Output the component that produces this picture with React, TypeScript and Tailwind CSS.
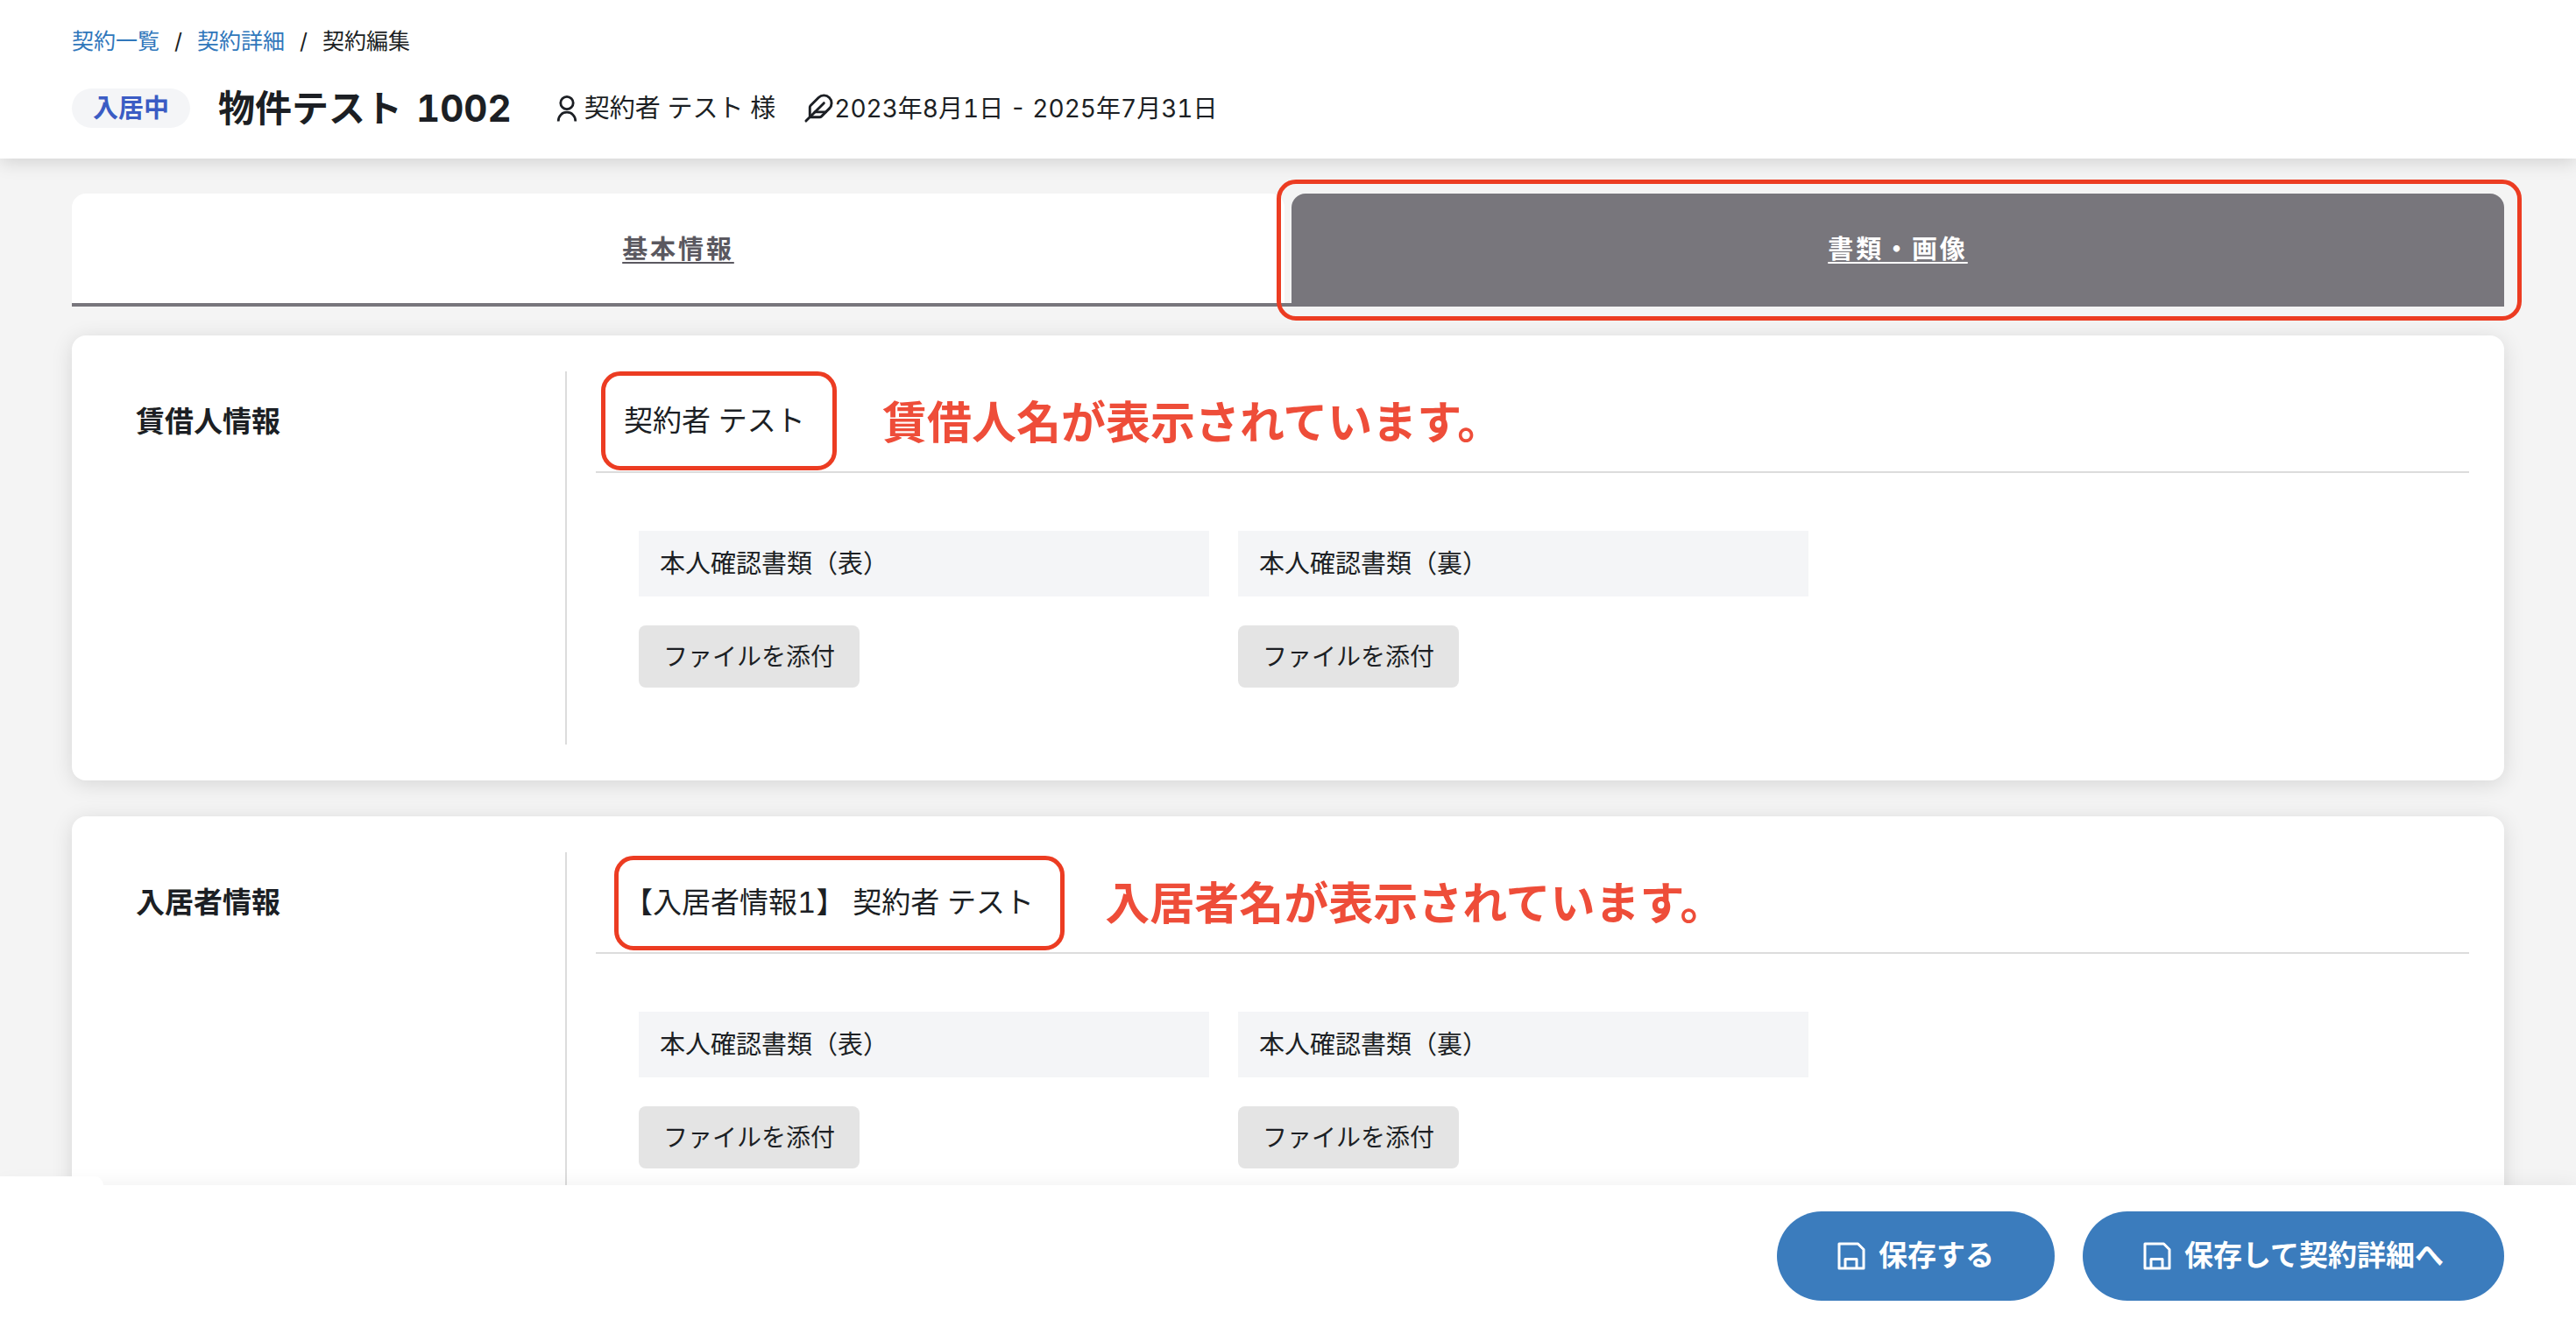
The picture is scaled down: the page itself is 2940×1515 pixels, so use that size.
import { Feather } from 'lucide-react'

interface Tenant {
  id: string
  label: string
  name: string
  note: string
  frameClass: string
  noteClass: string
}

const tenants: Tenant[] = [
  {
    id: 'lessee',
    label: '賃借人情報',
    name: '契約者 テスト',
    note: '賃借人名が表示されています。',
    frameClass: 'ml-1.5 mb-px pl-[21px] pr-[31px]',
    noteClass: 'ml-[52px]',
  },
  {
    id: 'resident',
    label: '入居者情報',
    name: '【入居者情報1】 契約者 テスト',
    note: '入居者名が表示されています。',
    frameClass: 'ml-[21px] mt-1 mb-0.5 pl-1.5 pr-[30px]',
    noteClass: 'ml-[46px]',
  },
]

const documents = ['本人確認書類（表）', '本人確認書類（裏）']

function UserIcon() {
  return (
    <svg width="24" height="32" viewBox="0 0 24 32" fill="none" stroke="currentColor" strokeWidth="2.8" aria-hidden="true">
      <circle cx="12" cy="9.5" r="7.2" />
      <path d="M2.2 30.5C2.2 24.5 6.5 20.2 12 20.2S21.8 24.5 21.8 30.5" />
    </svg>
  )
}

function SaveIcon() {
  return (
    <svg width="32" height="32" viewBox="0 0 32 32" fill="none" stroke="currentColor" strokeWidth="3" strokeLinejoin="round" aria-hidden="true">
      <path d="M2 2H23.5L30 8.5V30H2Z" />
      <path d="M9 30V19.5H22V30" />
    </svg>
  )
}

function Header() {
  return (
    <header className="relative z-10 bg-white px-[82px] pt-[30px] pb-[26px] shadow-[0_4px_20px_rgba(0,0,0,0.14)]">
      <nav aria-label="パンくず" className="flex h-9 items-center gap-[17px] text-[25px]">
        <a href="#list" className="text-[#3077bb]">契約一覧</a>
        <span>/</span>
        <a href="#detail" className="text-[#3077bb]">契約詳細</a>
        <span>/</span>
        <span>契約編集</span>
      </nav>
      <div className="mt-[26px] flex h-[63px] items-center">
        <span className="flex h-[45px] items-center rounded-full bg-[#f4f5f7] px-6 text-[29px] font-bold text-[#3b5cc4]">
          入居中
        </span>
        <h1 className="ml-8 flex gap-4 text-[42px] font-bold">
          <span>物件テスト</span>
          <span>1002</span>
        </h1>
        <div className="ml-[51px] flex items-center gap-2 text-[29px]">
          <UserIcon />
          <span>契約者 テスト 様</span>
        </div>
        <div className="ml-8 flex items-center text-[28px]">
          <Feather size={35} strokeWidth={2} />
          <span>2023年8月1日 - 2025年7月31日</span>
        </div>
      </div>
    </header>
  )
}

function Tabs() {
  return (
    <nav className="grid grid-cols-2 gap-2 border-b-4 border-[#78767c] text-[29px] font-bold tracking-widest">
      <a href="#basic" className="flex h-[125px] items-center justify-center rounded-t-2xl bg-white pt-0.5 text-[#5a585f] underline underline-offset-4">
        基本情報
      </a>
      <div className="relative">
        <a href="#documents" aria-current="page" className="flex h-[125px] items-center justify-center rounded-t-2xl bg-[#78767c] pt-0.5 text-white underline underline-offset-4">
          書類・画像
        </a>
        {/* highlight frame around the active tab */}
        <div className="pointer-events-none absolute -top-4 -right-5 -bottom-5 -left-[17px] rounded-[22px] border-[5px] border-[#ec3c22]" />
      </div>
    </nav>
  )
}

function DocumentField({ title }: { title: string }) {
  return (
    <div className="flex flex-col items-start gap-[33px]">
      <div className="flex h-[75px] w-full items-center bg-[#f4f5f7] px-6 text-[29px]">{title}</div>
      <button type="button" className="h-[71px] rounded-lg bg-[#e4e4e4] px-7 text-[28px]">
        ファイルを添付
      </button>
    </div>
  )
}

function TenantCard({ tenant }: { tenant: Tenant }) {
  return (
    <section className="flex rounded-2xl bg-white py-[41px] pr-10 shadow-[0_4px_24px_rgba(0,0,0,0.12)]">
      <h2 className="flex h-[116px] w-[563px] shrink-0 items-center pl-[73px] text-[33px] font-bold">{tenant.label}</h2>
      <div className="flex-1 border-l-2 border-[#dcdcdc] pb-[65px] pl-[33px]">
        <div className="flex h-[116px] items-stretch border-b-2 border-[#dcdcdc]">
          <div className={`flex items-center rounded-[22px] border-[5px] border-[#ec3c22] text-[33px] ${tenant.frameClass}`}>
            {tenant.name}
          </div>
          <p className={`flex items-center pt-1 text-[51px] font-bold text-[#ee4d39] ${tenant.noteClass}`}>{tenant.note}</p>
        </div>
        <div className="grid grid-cols-3 gap-[33px] pt-[66px] pr-[70px] pl-[49px]">
          {documents.map(title => (
            <DocumentField key={title} title={title} />
          ))}
        </div>
      </div>
    </section>
  )
}

function SaveButton({ label }: { label: string }) {
  return (
    <button type="button" className="flex h-[102px] items-center gap-[15px] rounded-full bg-[#3b7cbd] px-[69px] text-[33px] font-bold text-white">
      <SaveIcon />
      {label}
    </button>
  )
}

function Footer() {
  return (
    <footer className="relative z-10 flex justify-end gap-8 bg-white px-[82px] py-[30px] shadow-[0_-2px_20px_rgba(0,0,0,0.06)]">
      <div className="absolute bottom-full left-0 h-2.5 w-[118px] rounded-tr-[10px] bg-white" />
      <SaveButton label="保存する" />
      <SaveButton label="保存して契約詳細へ" />
    </footer>
  )
}

export default function App() {
  return (
    <div className="flex h-screen flex-col overflow-hidden bg-[#f4f4f4] font-[Inter,'Noto_Sans_CJK_JP',sans-serif] text-[#1c1f24] tabular-nums">
      <Header />
      <main className="min-h-0 flex-1 overflow-hidden px-[82px] pt-10">
        <Tabs />
        <div className="mt-[33px] flex flex-col gap-[41px]">
          {tenants.map(tenant => (
            <TenantCard key={tenant.id} tenant={tenant} />
          ))}
        </div>
      </main>
      <Footer />
    </div>
  )
}
